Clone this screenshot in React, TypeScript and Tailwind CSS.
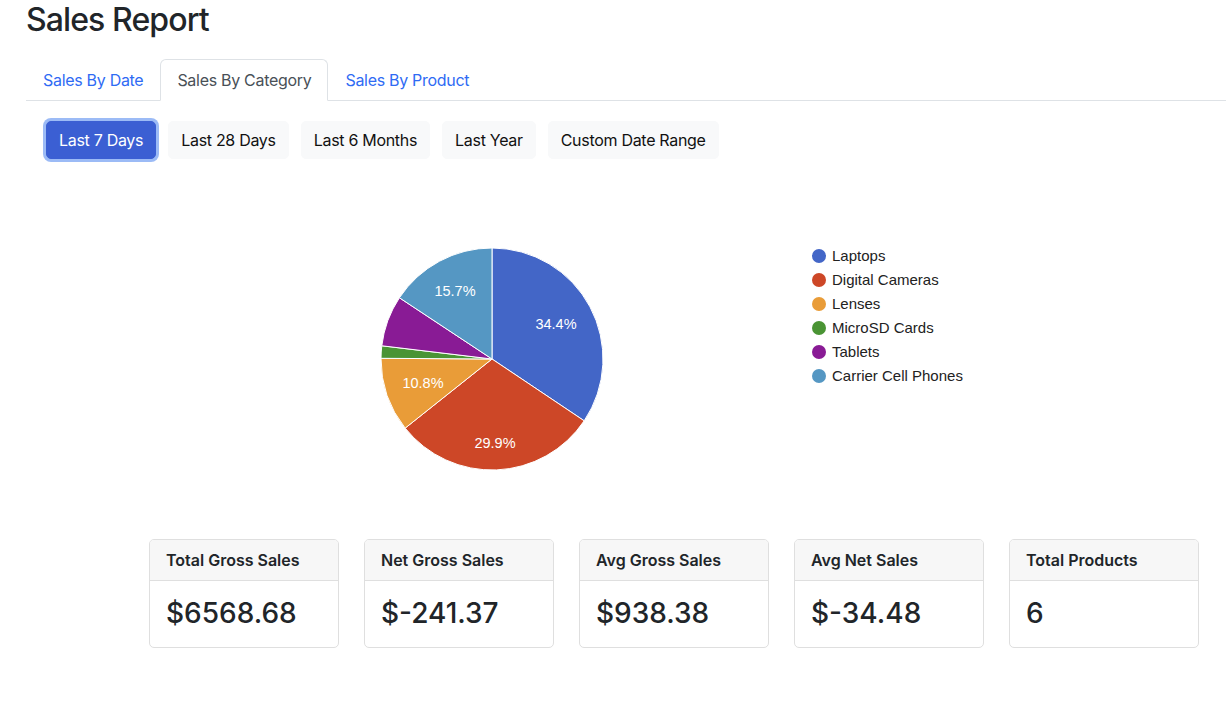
import React from "react";

const SLICES = [
  { label: "Laptops", value: 34.4, color: "#4366c7" },
  { label: "Digital Cameras", value: 29.9, color: "#cd4727" },
  { label: "Lenses", value: 10.8, color: "#e99c38" },
  { label: "MicroSD Cards", value: 1.8, color: "#4a9434" },
  { label: "Tablets", value: 7.4, color: "#891b95" },
  { label: "Carrier Cell Phones", value: 15.7, color: "#5597c3" },
];

const STATS = [
  { title: "Total Gross Sales", value: "$6568.68" },
  { title: "Net Gross Sales", value: "$-241.37" },
  { title: "Avg Gross Sales", value: "$938.38" },
  { title: "Avg Net Sales", value: "$-34.48" },
  { title: "Total Products", value: "6" },
];

const RANGES = ["Last 7 Days", "Last 28 Days", "Last 6 Months", "Last Year", "Custom Date Range"];

function PieChart() {
  const cx = 466;
  const cy = 180;
  const r = 111;
  let acc = 0;
  const paths = SLICES.map((s) => {
    const a0 = (acc / 100) * Math.PI * 2;
    acc += s.value;
    const a1 = (acc / 100) * Math.PI * 2;
    const x0 = cx + r * Math.sin(a0);
    const y0 = cy - r * Math.cos(a0);
    const x1 = cx + r * Math.sin(a1);
    const y1 = cy - r * Math.cos(a1);
    const large = a1 - a0 > Math.PI ? 1 : 0;
    return (
      <path
        key={s.label}
        d={`M${cx} ${cy} L${x0} ${y0} A${r} ${r} 0 ${large} 1 ${x1} ${y1} Z`}
        fill={s.color}
        stroke="#ffffff"
        strokeWidth={1}
      />
    );
  });

  const labels = [
    { t: "34.4%", x: cx + 64, y: cy - 30 },
    { t: "29.9%", x: cx + 3, y: cy + 89 },
    { t: "10.8%", x: cx - 69, y: cy + 29 },
    { t: "15.7%", x: cx - 37, y: cy - 63 },
  ];

  return (
    <svg width={1200} height={360} className="block" style={{ fontFamily: '"Liberation Sans", Arial, sans-serif' }}>
      {paths}
      {labels.map((l) => (
        <text key={l.t} x={l.x} y={l.y} fill="#ffffff" fontSize={14.5} textAnchor="middle">
          {l.t}
        </text>
      ))}
      {SLICES.map((s, i) => (
        <g key={s.label}>
          <circle cx={793} cy={77 + i * 24} r={7} fill={s.color} />
          <text x={806} y={82 + i * 24} fill="#222222" fontSize={15}>
            {s.label}
          </text>
        </g>
      ))}
    </svg>
  );
}

export default function App() {
  return (
    <div className="min-h-[721px] bg-white pl-[26px] text-[#212529]" style={{ fontFamily: 'Inter, "Noto Sans", sans-serif' }}>
      <h2 className="mt-[1px] text-[32px] font-medium leading-[1.2] tracking-[-0.9px]">Sales Report</h2>

      {/* Tabs */}
      <div className="mt-[20px] flex border-b border-[#dee2e6] text-[16px] leading-6 tracking-[-0.3px]">
        <button className="-mb-px border border-transparent px-4 py-2 text-[#2f6bf4]">Sales By Date</button>
        <button className="-mb-px rounded-t-[6px] border border-[#dee2e6] border-b-white bg-white px-4 py-2 text-[#495057]">
          Sales By Category
        </button>
        <button className="-mb-px border border-transparent px-4 py-2 text-[#2f6bf4]">Sales By Product</button>
      </div>

      {/* Date ranges */}
      <div className="mt-[20px] flex gap-3 pl-[20px] tracking-[-0.3px]">
        {RANGES.map((r, i) =>
          i === 0 ? (
            <button
              key={r}
              className="rounded-[5px] border border-[#3b5fd3] bg-[#3b5fd3] px-3 py-[6px] text-[16px] leading-6 text-white ring-[3px] ring-[#9cbbf6]"
            >
              {r}
            </button>
          ) : (
            <button key={r} className="rounded-[5px] border border-[#f8f9fa] bg-[#f8f9fa] px-3 py-[6px] text-[16px] leading-6 text-[#111]">
              {r}
            </button>
          )
        )}
      </div>

      <div className="mt-[20px]">
        <PieChart />
      </div>

      {/* Stat cards */}
      <div className="ml-[123px] flex gap-[25px]">
        {STATS.map((s) => (
          <div key={s.title} className="w-[190px] overflow-hidden rounded-[5px] border border-[#dfdfdf]">
            <div className="border-b border-[#dfdfdf] bg-[#f7f7f7] px-4 py-2 text-[16px] font-semibold leading-6">{s.title}</div>
            <div className="px-4 py-4 text-[28px] font-medium leading-[1.2]">{s.value}</div>
          </div>
        ))}
      </div>
    </div>
  );
}
